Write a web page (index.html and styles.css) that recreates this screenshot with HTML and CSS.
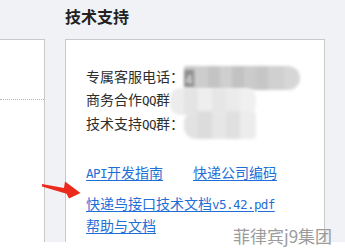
FILE: index.html
```html
<!DOCTYPE html>
<html lang="zh-CN">
<head>
<meta charset="utf-8">
<title>技术支持</title>
<link rel="stylesheet" href="styles.css">
</head>
<body>
<div class="page">
  <section class="col col-left">
    <div class="col-head"></div>
    <div class="box box-left">
      <div class="left-top"></div>
    </div>
  </section>
  <section class="col col-right">
    <h2 class="col-head title">技术支持</h2>
    <div class="box box-right">
      <div class="info">
        <div class="row">专属客服电话：<span class="mask mask-1"><span class="mask-digit">4</span></span></div>
        <div class="row">商务合作<span class="en">QQ</span>群<span class="mask mask-2"></span></div>
        <div class="row">技术支持<span class="en">QQ</span>群：<span class="mask mask-3"></span></div>
      </div>
      <div class="links">
        <div class="link-row first"><a href="#" class="lnk gap"><span class="en">API</span>开发指南</a><a href="#" class="lnk">快递公司编码</a></div>
        <div class="link-row"><a href="#" class="lnk">快递鸟接口技术文档<span class="en">v5.42.pdf</span></a></div>
        <div class="link-row"><a href="#" class="lnk">帮助与文档</a></div>
      </div>
    </div>
  </section>
</div>
<svg class="arrow" width="39" height="18" viewBox="0 0 39 18" aria-hidden="true">
  <polygon points="0,3 22,7 23,0.5 38.5,12 27,17.5 24.5,12.8 0,5.6" fill="#ec2a1c"/>
</svg>
<div class="watermark">菲律宾j9集团</div>
</body>
</html>
```

FILE: styles.css
```css
html, body {
  margin: 0;
  padding: 0;
  background: #ffffff;
}
body {
  position: relative;
  width: 345px;
  height: 249px;
  overflow: hidden;
  font-family: "Noto Sans CJK SC", "Noto Sans", sans-serif;
  color: #333333;
}
.page {
  display: flex;
  align-items: stretch;
  gap: 20px;
  height: 242px;
  background: #f1f2f6;
  overflow: hidden;
}
.col {
  display: flex;
  flex-direction: column;
}
.col-left {
  width: 45px;
}
.col-right {
  width: 260px;
}
.col-head {
  height: 39px;
  box-sizing: border-box;
  margin: 0;
}
.title {
  padding-top: 6px;
  font-size: 16px;
  line-height: 20px;
  font-weight: bold;
  color: #222222;
}
.box {
  flex: 1;
  background: #ffffff;
  border: 1px solid #c9c9c9;
  border-bottom: none;
}
.box-left {
  border-left: none;
}
.left-top {
  height: 59px;
  border-bottom: 1px dotted #b8b8b8;
}
.box-right {
  padding: 25px 0 0 20px;
}
.row {
  font-size: 14px;
  line-height: 23px;
  white-space: nowrap;
  color: #2e2e2e;
}
.en {
  font-family: "DejaVu Sans Mono", monospace;
  font-size: 12.6px;
  letter-spacing: -0.6px;
}
.mask {
  display: inline-block;
  vertical-align: middle;
  margin: -6px 0;
  height: 24px;
  filter: blur(1.6px);
  border-radius: 2px 12px 12px 2px;
}
.mask-1 {
  width: 116px;
  background: linear-gradient(90deg, #c8c8c8 0 12px, #cdcdcd 12px 24px, #c4c4c4 24px 36px, #cfcfcf 36px 48px, #c2c2c2 48px 60px, #cbcbcb 60px 72px, #c6c6c6 72px 84px, #d0d0d0 84px 100px, #d6d6d6 100px);
}
.mask-digit {
  display: block;
  width: 10px;
  height: 17px;
  margin-top: 4px;
  background: #8e8e8e;
  color: #f4f4f4;
  font-size: 12px;
  line-height: 17px;
  text-align: center;
}
.mask-2 {
  width: 86px;
  height: 27px;
  background: linear-gradient(90deg, #ececec 0 14px, #e4e4e4 14px 28px, #eeeeee 28px 42px, #e6e6e6 42px 56px, #ebebeb 56px 70px, #f0f0f0 70px);
  border-radius: 10px;
}
.mask-3 {
  width: 72px;
  height: 28px;
  background: linear-gradient(90deg, #e2e2e2 0 14px, #dcdcdc 14px 28px, #e6e6e6 28px 42px, #e0e0e0 42px 56px, #ececec 56px);
  border-radius: 12px 4px 4px 12px;
}
.links {
  margin-top: 26px;
}
.link-row {
  font-size: 14px;
  line-height: 20px;
  white-space: nowrap;
}
.link-row.first {
  margin-bottom: 9px;
}
.lnk {
  color: #1f6fd6;
  text-decoration: underline;
  text-underline-offset: 2px;
}
.lnk.gap {
  margin-right: 30px;
}
.arrow {
  position: absolute;
  left: 42px;
  top: 181px;
}
.watermark {
  position: absolute;
  left: 233px;
  top: 224px;
  font-size: 17px;
  line-height: 24px;
  color: #9c9c9c;
  white-space: nowrap;
}
```
